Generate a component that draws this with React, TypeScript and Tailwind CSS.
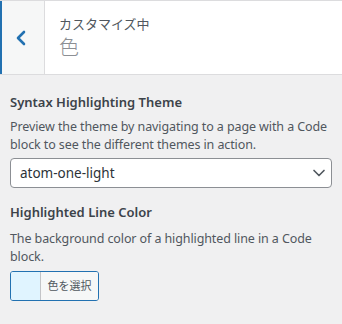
import { ChevronDown, ChevronLeft } from 'lucide-react';

const font = { fontFamily: '"Noto Sans", "Noto Sans CJK JP", sans-serif' };

export default function App() {
  return (
    <div className="w-[342px] h-[324px] overflow-hidden bg-[#f0f0f1] text-[#50575e]" style={font}>
      <div className="flex h-[75px] bg-white border-t border-b border-[#dcdcde]">
        <button className="w-[45px] shrink-0 flex items-center justify-center pr-[5px] bg-[#f6f7f7] border-l-2 border-l-[#2271b1] border-r border-r-[#dcdcde] text-[#2271b1]">
          <ChevronLeft size={24} strokeWidth={2.6} />
        </button>
        <div className="pl-[14px] pt-[13px] flex flex-col">
          <span className="text-[13px] leading-[20px] text-[#50575e]">カスタマイズ中</span>
          <span className="text-[20px] leading-[28px] font-light text-[#8c8f94]">色</span>
        </div>
      </div>

      <div className="px-[10px] pt-[17px]">
        <div className="text-[13px] leading-[20px] font-semibold text-[#3c434a]">Syntax Highlighting Theme</div>
        <p className="mt-[6px] text-[12.5px] leading-[18px] tracking-[-0.1px]">
          Preview the theme by navigating to a page with a Code block to see the different themes in action.
        </p>
        <div className="mt-[4px] h-[30px] flex items-center justify-between bg-white border border-[#8c8f94] rounded-[4px] pl-[9px] pr-[2px]">
          <span className="text-[13.5px] text-[#2c3338]">atom-one-light</span>
          <ChevronDown size={20} strokeWidth={2} className="text-[#50575e]" />
        </div>

        <div className="mt-[14px] text-[13px] leading-[20px] font-semibold text-[#3c434a]">Highlighted Line Color</div>
        <p className="mt-[8px] text-[12.5px] leading-[18px] tracking-[-0.1px]">
          The background color of a highlighted line in a Code block.
        </p>
        <button className="mt-[5px] h-[30px] w-[89px] flex rounded-[3px] border border-[#2271b1] overflow-hidden">
          <span className="w-[30px] h-full bg-[#e0f4ff] border-r border-[#c3c4c7]" />
          <span className="flex-1 h-full flex items-center justify-center bg-[#f6f7f7] text-[11px] text-[#50575e]">色を選択</span>
        </button>
      </div>
    </div>
  );
}
